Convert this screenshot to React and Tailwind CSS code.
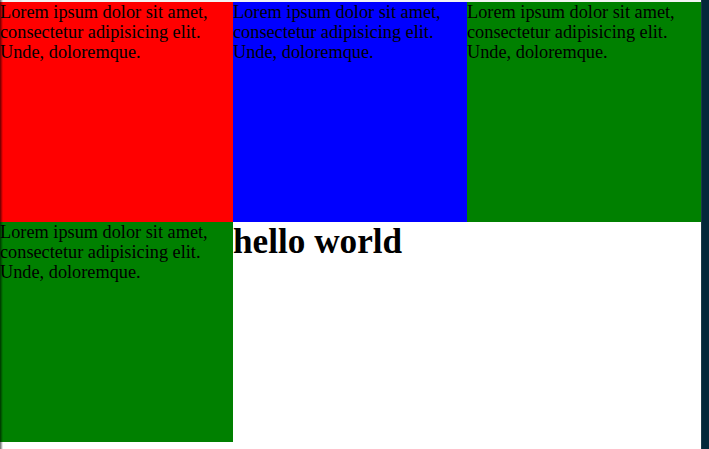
const text = 'Lorem ipsum dolor sit amet, consectetur adipisicing elit. Unde, doloremque.'

const cells = ['bg-[#ff0000]', 'bg-[#0000ff]', 'bg-[#008000]', 'bg-[#008000]']

export default function App() {
  return (
    <div className="flex h-[449px] overflow-hidden bg-white font-['Liberation_Serif',serif] text-black">
      <div className="relative flex w-[701px] flex-col">
        {/* thin strip above the grid */}
        <div className="h-[2px] bg-[#f4f4f4]" />
        <div className="grid grid-cols-[233px_234px_234px] grid-rows-[220px_220px]">
          {cells.map((bg, i) => (
            <div key={i} className={`${bg} text-[18.3px] leading-[20px]`}>
              {text}
            </div>
          ))}
          <h1 className="text-[35.2px] font-bold leading-[1.15]">hello world</h1>
        </div>
        {/* soft edge on the left side */}
        <div className="pointer-events-none absolute inset-y-0 left-0 w-[3px] bg-gradient-to-r from-black/60 to-transparent" />
      </div>
      <div className="flex-1 border-l border-[#1a3a48] bg-[#03283a]" />
    </div>
  )
}
